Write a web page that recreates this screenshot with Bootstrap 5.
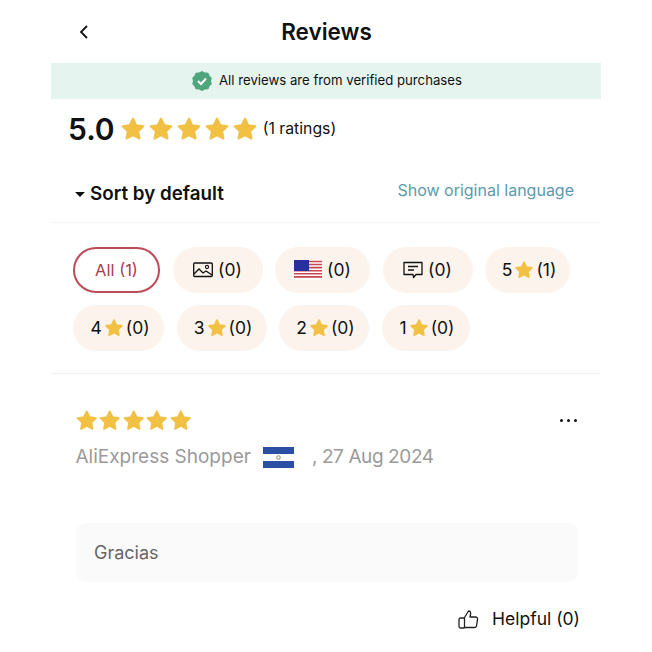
<!DOCTYPE html>
<html lang="en">
<head>
  <meta charset="UTF-8">
  <meta name="viewport" content="width=device-width, initial-scale=1.0">
  <title>Reviews</title>
  <link rel="stylesheet" href="https://cdn.jsdelivr.net/npm/bootstrap@5.3.0/dist/css/bootstrap.min.css">
  <style>
    body { font-family: "Inter", "Liberation Sans", sans-serif; color: #111; background: #fff; }
    .page-wrap { width: 550px; margin-left: 51px; }
    .top-bar { height: 63px; padding-left: 26px; }
    .top-title { font-size: 22.500px; font-weight: 600; left: 1px; right: 0; top: 16px; text-align: center; margin: 0; line-height: 32px; }
    .verified-bar { height: 36px; background: #e5f4ef; font-size: 13.200px; gap: 6px; padding-left: 1px; }
    .rating-row { height: 62px; padding-left: 17px; padding-bottom: 2px; }
    .rating-num { font-size: 30px; font-weight: 600; margin-right: 5px; line-height: 1; }
    .rating-count { font-size: 15.800px; margin-left: 5px; }
    .star-line { gap: 2px; }
    .star-line svg { width: 26px; height: 26px; }
    .sort-row { height: 62px; padding: 0 27px 0 24px; border-bottom: 1px solid #f7f7f7; }
    .sort-label { font-size: 18.800px; font-weight: 600; gap: 5px; padding-top: 6px; }
    .sort-caret { width: 0; height: 0; border-left: 5px solid transparent; border-right: 5px solid transparent; border-top: 5px solid #111; }
    .lang-link { font-size: 16px; color: #5b9bab; margin-bottom: 4px; }
    .chip-area { padding: 24px 22px 22px; gap: 12px; border-bottom: 1px solid #f1f1f1; }
    .chip-row { gap: 12.500px; }
    .chip-item { height: 46px; border-radius: 23px; background: #fcf4ec; font-size: 17.500px; gap: 5px; }
    .chip-on { background: #fff; border: 2px solid #bb4b57; color: #a8404c; font-size: 16.500px; }
    .w-87 { width: 87px; } .w-90 { width: 90px; } .w-95 { width: 95px; } .w-85 { width: 85px; } .w-91 { width: 91px; } .w-88 { width: 88px; }
    .gap-star { gap: 2px; padding-left: 3px; }
    .review-block { padding: 35px 21px 0 23.500px; }
    .review-head { padding-right: 3.500px; }
    .review-meta { font-size: 19px; color: #9a9a9a; margin-top: 9px; height: 32px; padding-left: 1px; }
    .meta-date { letter-spacing: -.4px; }
    .flag-gap { margin: 0 18px 0 12px; }
    .review-text { height: 59px; background: #fafafa; border-radius: 10px; margin-top: 50px; padding-left: 18px; font-size: 18px; color: #666; width: 502px; margin-left: 1.500px; }
    .helpful-row { font-size: 17.500px; margin-top: 24px; gap: 13px; }
    .dots-line { gap: 4px; }
    .dots-line span { width: 3px; height: 3px; border-radius: 50%; background: #111; }
  </style>
</head>
<body>
  <svg width="0" height="0" class="d-block">
    <symbol id="star" viewBox="0 0 24 24">
      <path d="M12 2.500l2.900 6.100 6.600.9-4.800 4.600 1.200 6.600-5.900-3.200-5.900 3.200 1.200-6.600L2.500 9.500l6.600-.9z" fill="#f2c144" stroke="#f2c144" stroke-width="2" stroke-linejoin="round"/>
    </symbol>
  </svg>

  <div class="page-wrap">
    <div class="top-bar position-relative d-flex align-items-center">
      <svg width="14" height="18" viewBox="0 0 14 18"><path d="M10 3L4 9l6 6" fill="none" stroke="#111" stroke-width="1.800"/></svg>
      <h1 class="top-title position-absolute">Reviews</h1>
    </div>

    <div class="verified-bar d-flex align-items-center justify-content-center">
      <svg width="22" height="22" viewBox="0 0 22 22">
        <path d="M11 1l3 1.500 3.300.3 1.300 2.900 2.200 2.300-.8 3 .8 3-2.200 2.300-1.300 2.900-3.300.3L11 21l-3-1.500-3.300-.3-1.300-2.900L1.200 14l.8-3-.8-3 2.200-2.300 1.300-2.900L8 2.500z" fill="#4fa67c"/>
        <path d="M7 11l3 3 5-5.500" fill="none" stroke="#fff" stroke-width="2"/>
      </svg>
      <span>All reviews are from verified purchases</span>
    </div>

    <div class="rating-row d-flex align-items-center">
      <span class="rating-num">5.0</span>
      <div class="star-line d-flex">
        <svg><use href="#star"/></svg>
        <svg><use href="#star"/></svg>
        <svg><use href="#star"/></svg>
        <svg><use href="#star"/></svg>
        <svg><use href="#star"/></svg>
      </div>
      <span class="rating-count">(1 ratings)</span>
    </div>

    <div class="sort-row d-flex align-items-center justify-content-between">
      <div class="sort-label d-flex align-items-center"><span class="sort-caret"></span>Sort by default</div>
      <div class="lang-link">Show original language</div>
    </div>

    <div class="chip-area d-flex flex-column">
      <div class="chip-row d-flex">
        <div class="chip-item chip-on w-87 d-flex align-items-center justify-content-center">All (1)</div>
        <div class="chip-item w-90 d-flex align-items-center justify-content-center">
          <svg width="20" height="16" viewBox="0 0 20 16"><rect x=".7" y="1" width="18.600" height="13.500" rx="1" fill="none" stroke="#111" stroke-width="1.300"/><path d="M1 12l5-5 4 4 3-2 6 4" fill="none" stroke="#111" stroke-width="1.300"/><circle cx="14" cy="5" r="1.600" fill="none" stroke="#111" stroke-width="1.100"/></svg>
          <span>(0)</span>
        </div>
        <div class="chip-item w-95 d-flex align-items-center justify-content-center">
          <svg width="28" height="20" viewBox="0 0 28 20">
            <rect width="28" height="20" fill="#fff"/>
            <path d="M0 1.500h28M0 4.500h28M0 7.600h28M0 10.700h28M0 13.800h28M0 16.900h28" stroke="#c8464f" stroke-width="1.600"/>
            <rect width="15" height="11" fill="#2b2f9e"/>
          </svg>
          <span>(0)</span>
        </div>
        <div class="chip-item w-90 d-flex align-items-center justify-content-center">
          <svg width="20" height="18" viewBox="0 0 20 18"><path d="M1 1.500h18v12h-6l-2.500 3-.5-3H1z" fill="none" stroke="#111" stroke-width="1.300" stroke-linejoin="round"/><path d="M5 5.500h10M5 9h6" stroke="#111" stroke-width="1.300"/></svg>
          <span>(0)</span>
        </div>
        <div class="chip-item w-85 d-flex align-items-center justify-content-center gap-star">
          <span>5</span><svg width="20" height="20"><use href="#star"/></svg><span>(1)</span>
        </div>
      </div>
      <div class="chip-row d-flex">
        <div class="chip-item w-91 d-flex align-items-center justify-content-center gap-star">
          <span>4</span><svg width="20" height="20"><use href="#star"/></svg><span>(0)</span>
        </div>
        <div class="chip-item w-90 d-flex align-items-center justify-content-center gap-star">
          <span>3</span><svg width="20" height="20"><use href="#star"/></svg><span>(0)</span>
        </div>
        <div class="chip-item w-90 d-flex align-items-center justify-content-center gap-star">
          <span>2</span><svg width="20" height="20"><use href="#star"/></svg><span>(0)</span>
        </div>
        <div class="chip-item w-88 d-flex align-items-center justify-content-center gap-star">
          <span>1</span><svg width="20" height="20"><use href="#star"/></svg><span>(0)</span>
        </div>
      </div>
    </div>

    <div class="review-block">
      <div class="review-head d-flex align-items-center justify-content-between">
        <div class="d-flex">
          <svg width="23.500" height="23"><use href="#star"/></svg>
          <svg width="23.500" height="23"><use href="#star"/></svg>
          <svg width="23.500" height="23"><use href="#star"/></svg>
          <svg width="23.500" height="23"><use href="#star"/></svg>
          <svg width="23.500" height="23"><use href="#star"/></svg>
        </div>
        <div class="dots-line d-flex"><span></span><span></span><span></span></div>
      </div>
      <div class="review-meta d-flex align-items-center">
        <span>AliExpress Shopper</span>
        <svg class="flag-gap" width="31" height="21" viewBox="0 0 31 21">
          <rect width="31" height="21" fill="#2a4fa3"/>
          <rect y="7" width="31" height="7" fill="#fff"/>
          <circle cx="15.500" cy="10.500" r="1.800" fill="none" stroke="#8c8c5a"/>
        </svg>
        <span class="meta-date">, 27 Aug 2024</span>
      </div>
      <div class="review-text d-flex align-items-center">Gracias</div>
      <div class="helpful-row d-flex align-items-center justify-content-end">
        <svg width="21" height="21" viewBox="0 0 21 21"><path d="M6.500 8.500l4-6.500c1.800 0 2.500 1.500 2 3.500l-.5 2.500h5.500c1.500 0 2.200 1 2 2.300l-1 6.500c-.2 1-1 1.700-2 1.700H6.500zM6.500 9H2.500c-.8 0-1.500.7-1.500 1.500v7c0 .8.700 1.500 1.500 1.500h4" fill="none" stroke="#222" stroke-width="1.300" stroke-linejoin="round"/></svg>
        <span>Helpful (0)</span>
      </div>
    </div>
  </div>

  <script src="https://cdn.jsdelivr.net/npm/bootstrap@5.3.0/dist/js/bootstrap.bundle.min.js"></script>
</body>
</html>
